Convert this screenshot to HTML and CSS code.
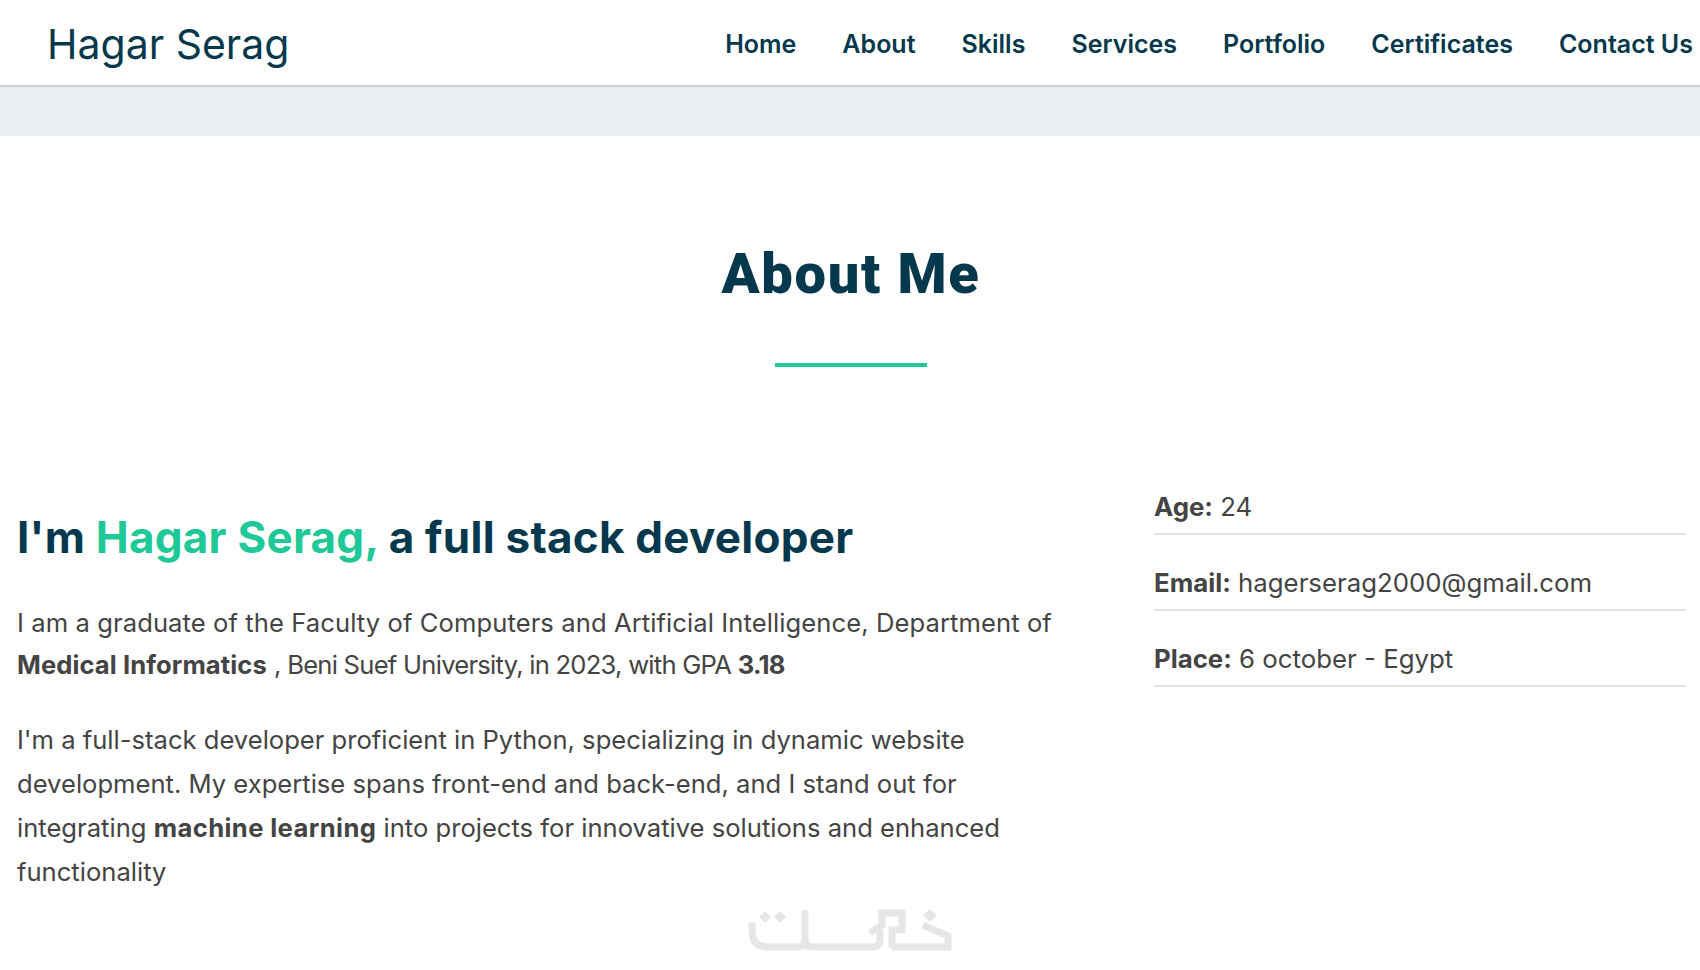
FILE: index.html
```html
<!DOCTYPE html>
<html lang="en">
<head>
  <meta charset="UTF-8" />
  <meta name="viewport" content="width=device-width, initial-scale=1.0" />
  <title>Hagar Serag</title>
  <link rel="stylesheet" href="styles.css">
</head>
<body>
  <header class="navbar">
    <a class="brand" href="#">Hagar Serag</a>
    <nav class="nav-links">
      <a href="#">Home</a>
      <a href="#">About</a>
      <a href="#">Skills</a>
      <a href="#">Services</a>
      <a href="#">Portfolio</a>
      <a href="#">Certificates</a>
      <a href="#">Contact Us</a>
    </nav>
  </header>
  <div class="band"></div>

  <section class="about">
    <h1 class="section-title">About Me</h1>
    <div class="title-line"></div>

    <div class="about-row">
      <div class="about-text">
        <h2>I'm <span class="accent">Hagar Serag,</span> a full stack developer</h2>
        <p class="intro">I am a graduate of the Faculty of Computers and Artificial Intelligence, Department of<br><strong>Medical Informatics</strong> <span class="tight">, Beni Suef University, in 2023, with GPA <strong>3.18</strong></span></p>
        <p class="bio">I'm a full-stack developer proficient in Python, specializing in dynamic website<br>development. My expertise spans front-end and back-end, and I stand out for<br>integrating <strong>machine learning</strong> into projects for innovative solutions and enhanced<br>functionality</p>
      </div>
      <ul class="about-info">
        <li><strong>Age:</strong> 24</li>
        <li><strong>Email:</strong> hagerserag2000@gmail.com</li>
        <li><strong>Place:</strong> 6 october - Egypt</li>
      </ul>
    </div>
  </section>

  <!-- watermark logo -->
  <svg class="watermark" viewBox="0 0 260 80" width="260" height="80" aria-hidden="true">
    <g fill="none" stroke="#e6e6e6" stroke-width="7">
      <path d="M32 33v8q0 16 16 16h30q7 0 7-7V20"/>
      <path d="M85 50q0 7 7 7h60q8 0 8-8v-9"/>
      <path d="M158 23h24v17h-10v18"/>
      <path d="M162 23v12l-12 8"/>
      <path d="M172 57h56V46l-25-11"/>
    </g>
    <g fill="#e6e6e6">
      <path d="M45 21l6 6-6 6-6-6z"/>
      <path d="M60 21l6 6-6 6-6-6z"/>
      <path d="M210 19l7 6-7 7-7-7z"/>
    </g>
  </svg>
</body>
</html>
```

FILE: styles.css
```css
* {
  box-sizing: border-box;
}
html, body {
  height: 100%;
  overflow: hidden;
}
body {
  margin: 0;
  position: relative;
  font-family: Inter, "Open Sans", sans-serif;
  background: #fff;
  color: #444;
}
a {
  color: inherit;
  text-decoration: none;
}
.navbar {
  height: 87px;
  display: flex;
  align-items: center;
  justify-content: space-between;
  padding: 2px 7px 0 47px;
  border-bottom: 2px solid #cfd0d4;
  color: #03384d;
}
.brand {
  font-size: 41px;
  font-weight: 400;
}
.nav-links {
  display: flex;
  gap: 46px;
  font-size: 25px;
  font-weight: 600;
}
.band {
  height: 49px;
  background: #ecf0f2;
}
.about {
  padding: 0 15px 0 17px;
}
.section-title {
  margin: 90px 0 0;
  text-align: center;
  font-family: Roboto, sans-serif;
  font-size: 56px;
  line-height: 96px;
  font-weight: 900;
  letter-spacing: 1.7px;
  color: #03384d;
}
.title-line {
  width: 152px;
  height: 4px;
  margin: 41px auto 0;
  background: #1ec997;
}
.about-row {
  display: flex;
  justify-content: space-between;
  margin-top: 93px;
}
.about-text {
  width: 1075px;
}
.about-text h2 {
  margin: 47px 0 0;
  font-size: 44px;
  line-height: 60px;
  font-weight: 700;
  letter-spacing: 0.25px;
  color: #03384d;
}
.accent {
  color: #1ec997;
}
.intro {
  margin: 35px 0 0;
  font-size: 25.6px;
  line-height: 42.3px;
  letter-spacing: 0.08px;
}
.tight {
  letter-spacing: -0.75px;
}
.bio {
  margin: 31px 0 0;
  font-size: 25.6px;
  line-height: 44px;
}
.bio strong {
  letter-spacing: 0.4px;
}
.about-info {
  width: 532px;
  margin: -1px -1px 0 0;
  padding: 0;
  list-style: none;
  font-size: 25.8px;
}
.about-info li {
  height: 76px;
  padding-top: 31px;
  line-height: 34px;
  border-bottom: 2px solid #e3e3e3;
}
.watermark {
  position: absolute;
  left: 720px;
  top: 890px;
}
```
